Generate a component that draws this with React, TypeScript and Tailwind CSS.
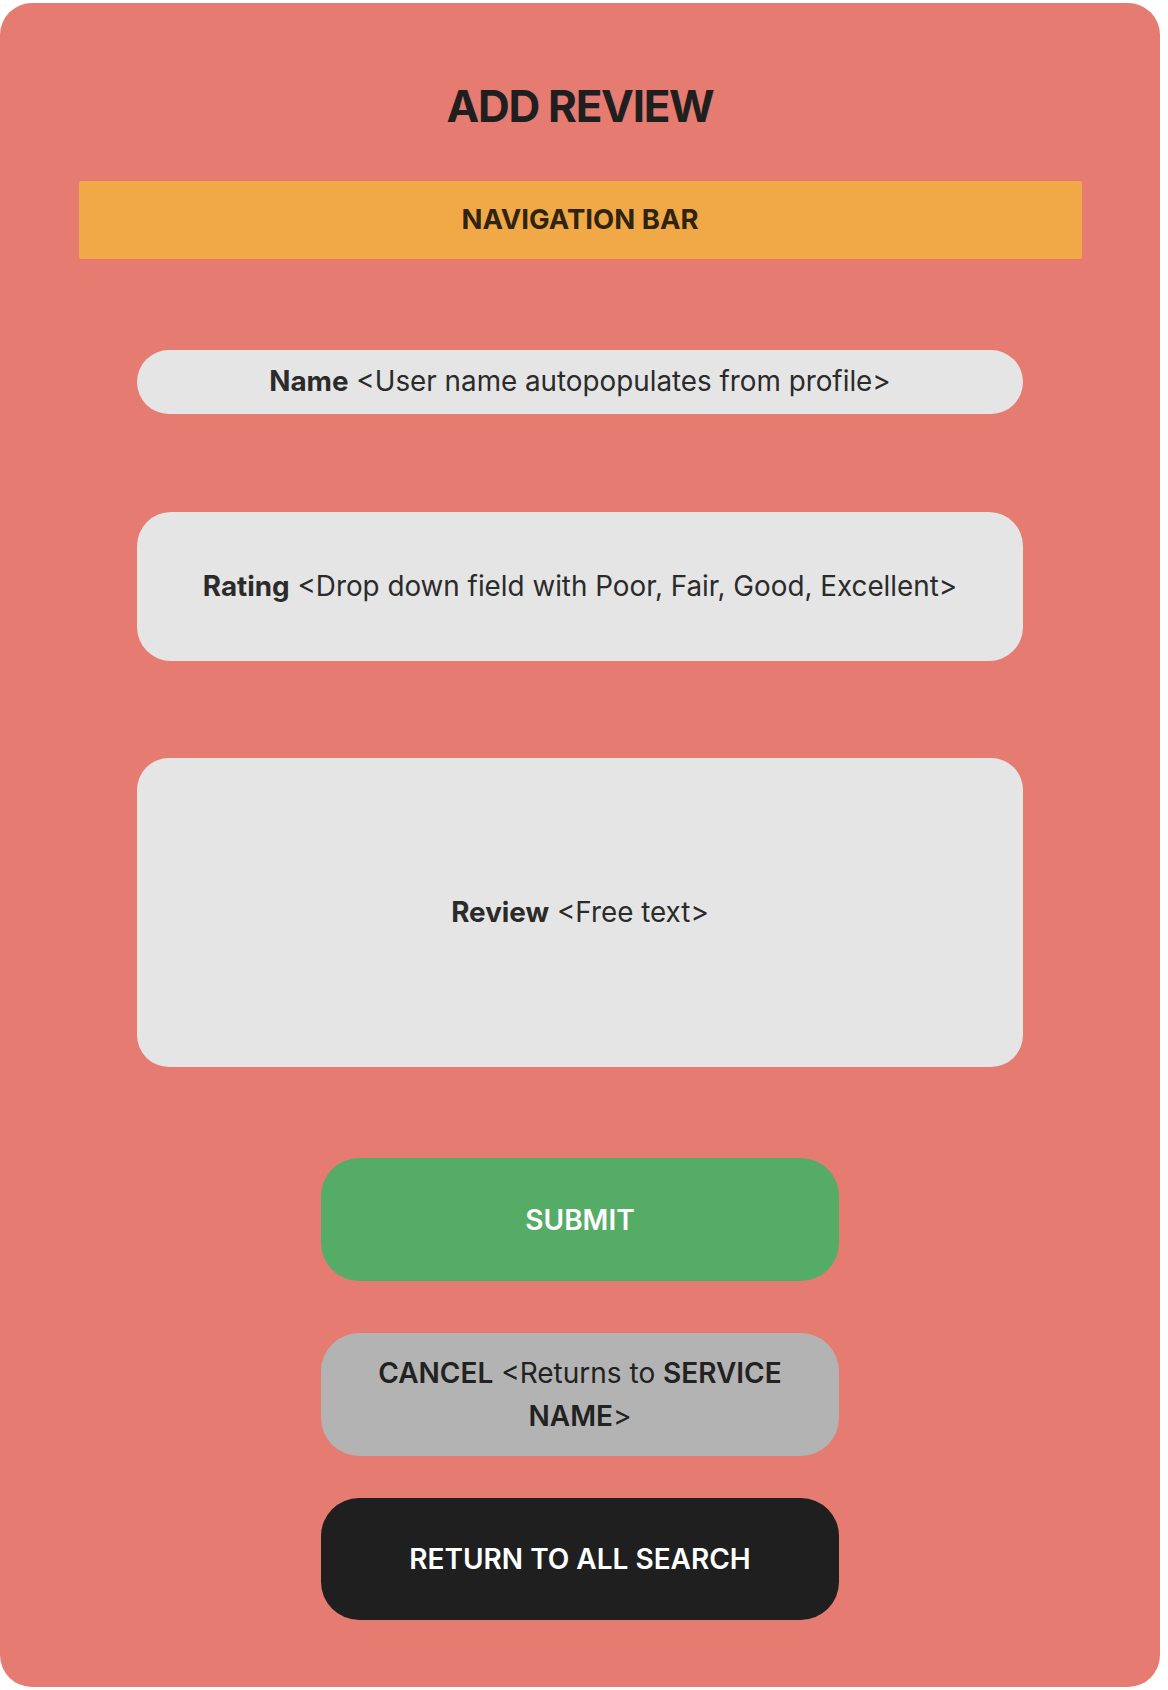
import React from "react";

export default function App() {
  return (
    <div className="w-[1168px] h-[1690px] bg-white pt-[3px]" style={{ fontFamily: "Inter, 'Noto Sans', sans-serif" }}>
      <div className="w-[1160px] h-[1684px] bg-[#e67b72] rounded-[32px] flex flex-col items-center pt-[81px]">
        <h1 className="text-[44px] leading-[44px] font-bold tracking-[-0.03em] text-[#1f1f1f]">ADD REVIEW</h1>

        <div className="mt-[53px] w-[1003px] h-[78px] bg-[#f1a947] rounded-[2px] flex items-center justify-center">
          <span className="text-[27.5px] font-bold text-[#2f2410]">NAVIGATION BAR</span>
        </div>

        <div className="mt-[91px] w-[886px] h-[64px] bg-[#e5e5e5] rounded-full flex items-center justify-center text-[27.8px] text-[#2b2b2b]">
          <span><b className="font-bold">Name</b> &lt;User name autopopulates from profile&gt;</span>
        </div>

        <div className="mt-[98px] w-[886px] h-[149px] bg-[#e5e5e5] rounded-[34px] flex items-center justify-center text-[27.8px] text-[#2b2b2b]">
          <span><b className="font-bold">Rating</b> &lt;Drop down field with Poor, Fair, Good, Excellent&gt;</span>
        </div>

        <div className="mt-[97px] w-[886px] h-[309px] bg-[#e5e5e5] rounded-[32px] flex items-center justify-center text-[27.8px] text-[#2b2b2b]">
          <span><b className="font-bold">Review</b> &lt;Free text&gt;</span>
        </div>

        <div className="mt-[91px] w-[518px] h-[123px] bg-[#55ac67] rounded-[38px] flex items-center justify-center">
          <span className="text-[28px] font-semibold text-white">SUBMIT</span>
        </div>

        <div className="mt-[52px] w-[518px] h-[123px] bg-[#b3b3b3] rounded-[38px] flex items-center justify-center px-[44px]">
          <span className="text-[28px] leading-[43px] text-center text-[#222222]">
            <b className="font-semibold">CANCEL</b> &lt;Returns to <b className="font-semibold">SERVICE NAME</b>&gt;
          </span>
        </div>

        <div className="mt-[42px] w-[518px] h-[122px] bg-[#1f1f1f] rounded-[38px] flex items-center justify-center">
          <span className="text-[28px] font-semibold text-white">RETURN TO ALL SEARCH</span>
        </div>
      </div>
    </div>
  );
}
